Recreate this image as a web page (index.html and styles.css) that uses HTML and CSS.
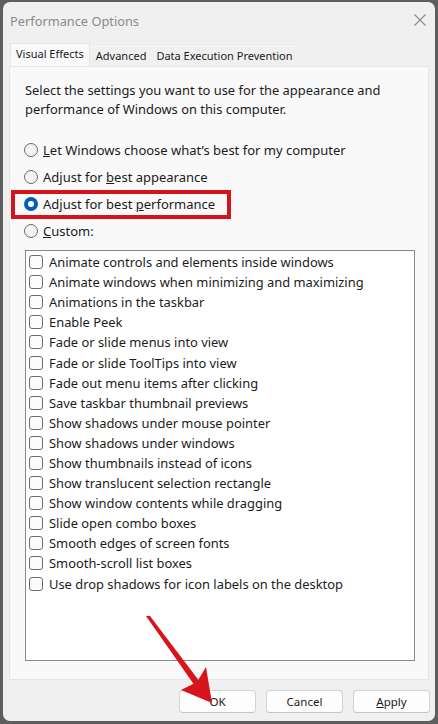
FILE: index.html
```html
<!DOCTYPE html>
<html>
<head>
<meta charset="utf-8">
<link rel="stylesheet" href="styles.css">
</head>
<body>
<div class="win">
  <div class="titlebar">
    <span class="title">Performance Options</span>
    <svg class="close" width="12" height="12" viewBox="0 0 12 12"><path d="M0.5 0.5 L11.5 11.5 M11.5 0.5 L0.5 11.5" stroke="#8a8a8a" stroke-width="1.1" fill="none"/></svg>
  </div>
  <div class="tabs">
    <div class="tab active">Visual Effects</div>
    <div class="tab">Advanced</div>
    <div class="tab">Data Execution Prevention</div>
  </div>
  <div class="panel">
    <p class="intro">Select the settings you want to use for the appearance and<br>performance of Windows on this computer.</p>
    <div class="radios">
      <div class="radio"><span class="rb"></span><span><u>L</u>et Windows choose what’s best for my computer</span></div>
      <div class="radio"><span class="rb"></span><span>Adjust for <u>b</u>est appearance</span></div>
      <div class="radio hl"><span class="rb on"></span><span>Adjust for best <u>p</u>erformance</span></div>
      <div class="radio"><span class="rb"></span><span><u>C</u>ustom:</span></div>
    </div>
    <div class="list">
      <div class="item"><span class="cb"></span>Animate controls and elements inside windows</div>
      <div class="item"><span class="cb"></span>Animate windows when minimizing and maximizing</div>
      <div class="item"><span class="cb"></span>Animations in the taskbar</div>
      <div class="item"><span class="cb"></span>Enable Peek</div>
      <div class="item"><span class="cb"></span>Fade or slide menus into view</div>
      <div class="item"><span class="cb"></span>Fade or slide ToolTips into view</div>
      <div class="item"><span class="cb"></span>Fade out menu items after clicking</div>
      <div class="item"><span class="cb"></span>Save taskbar thumbnail previews</div>
      <div class="item"><span class="cb"></span>Show shadows under mouse pointer</div>
      <div class="item"><span class="cb"></span>Show shadows under windows</div>
      <div class="item"><span class="cb"></span>Show thumbnails instead of icons</div>
      <div class="item"><span class="cb"></span>Show translucent selection rectangle</div>
      <div class="item"><span class="cb"></span>Show window contents while dragging</div>
      <div class="item"><span class="cb"></span>Slide open combo boxes</div>
      <div class="item"><span class="cb"></span>Smooth edges of screen fonts</div>
      <div class="item"><span class="cb"></span>Smooth-scroll list boxes</div>
      <div class="item"><span class="cb"></span>Use drop shadows for icon labels on the desktop</div>
    </div>
  </div>
  <div class="buttons">
    <div class="btn">OK</div>
    <div class="btn">Cancel</div>
    <div class="btn"><u>A</u>pply</div>
  </div>
  <svg class="arrow" width="438" height="724" viewBox="0 0 438 724">
    <path d="M146 616 L150 616 L200 682 L195 686 Z" fill="#d7141b"/>
    <path d="M181 690 L212 703 L206 667 L197 682 Z" fill="#d7141b"/>
  </svg>
</div>
</body>
</html>
```
FILE: styles.css
```css
html, body {
  margin: 0;
  padding: 0;
}
body {
  width: 438px;
  height: 724px;
  background: #5e5e5e;
  font-family: "Noto Sans", "Open Sans", sans-serif;
  font-size: 13px;
  color: #1b1b1b;
  overflow: hidden;
}
.win {
  position: relative;
  box-sizing: border-box;
  margin: 2px 3px 0 3px;
  width: 432px;
  height: 719px;
  background: #f0f0f0;
  border-radius: 7px;
  display: flex;
  flex-direction: column;
}
.titlebar {
  height: 40px;
  display: flex;
  align-items: center;
  justify-content: space-between;
  padding: 0 9px 0 7px;
}
.title {
  color: #8a8a8a;
  font-size: 12.8px;
  margin-top: -3px;
}
.close {
  margin-top: -4px;
}
.tabs {
  display: flex;
  align-items: flex-end;
  height: 24px;
  padding-left: 7px;
}
.tab {
  height: 19px;
  line-height: 18px;
  padding: 0 5px;
  font-size: 11px;
  background: #f0f0f0;
  border-top: 1px solid #f7f7f7;
}
.tab.active {
  height: 22px;
  line-height: 20px;
  background: #f9f9f9;
  border: 1px solid #e6e6e6;
  border-bottom: none;
  padding: 0 5px;
  margin-right: 1px;
}
.panel {
  box-sizing: border-box;
  width: 420px;
  margin-left: 6px;
  height: 614px;
  background: #f9f9f9;
  border: 1px solid #e6e6e6;
  padding: 14px 13px 0 15px;
  display: flex;
  flex-direction: column;
}
.intro {
  margin: 0;
  line-height: 19px;
  font-size: 12.9px;
  color: #1c1c1c;
}
.radios {
  margin-top: 17px;
  display: flex;
  flex-direction: column;
}
.radio {
  position: relative;
  height: 27px;
  display: flex;
  align-items: center;
  gap: 5px;
  margin-left: -1px;
}
.rb {
  box-sizing: border-box;
  width: 14px;
  height: 14px;
  border-radius: 50%;
  border: 1px solid #6b6b6b;
  background: #f4f4f4;
  flex: none;
}
.rb.on {
  border: 4px solid #0060b9;
  background: #ffffff;
}
.radio.hl::after {
  content: "";
  position: absolute;
  left: -13px;
  top: 0;
  width: 220px;
  height: 29px;
  box-sizing: border-box;
  border: 4px solid #d3141c;
}
.list {
  margin-top: 6px;
  box-sizing: border-box;
  width: 390px;
  height: 411px;
  background: #ffffff;
  border: 1px solid #888888;
  padding-top: 1px;
  display: flex;
  flex-direction: column;
}
.item {
  height: 20.1px;
  display: flex;
  align-items: center;
  gap: 6px;
  padding-left: 3px;
  font-size: 12.9px;
  color: #1c1c1c;
}
.cb {
  box-sizing: border-box;
  width: 14px;
  height: 14px;
  border: 1px solid #6d6d6d;
  border-radius: 3px;
  background: #fbfbfb;
  flex: none;
}
.buttons {
  display: flex;
  justify-content: flex-end;
  gap: 10px;
  padding: 10px 5px 0 0;
}
.btn {
  box-sizing: border-box;
  width: 77px;
  height: 23px;
  border: 1px solid #d3d3d3;
  border-bottom-color: #c4c4c4;
  border-radius: 4px;
  background: #fdfdfd;
  font-size: 11.5px;
  line-height: 21px;
  text-align: center;
}
.arrow {
  position: absolute;
  left: -3px;
  top: -2px;
  pointer-events: none;
}
```
